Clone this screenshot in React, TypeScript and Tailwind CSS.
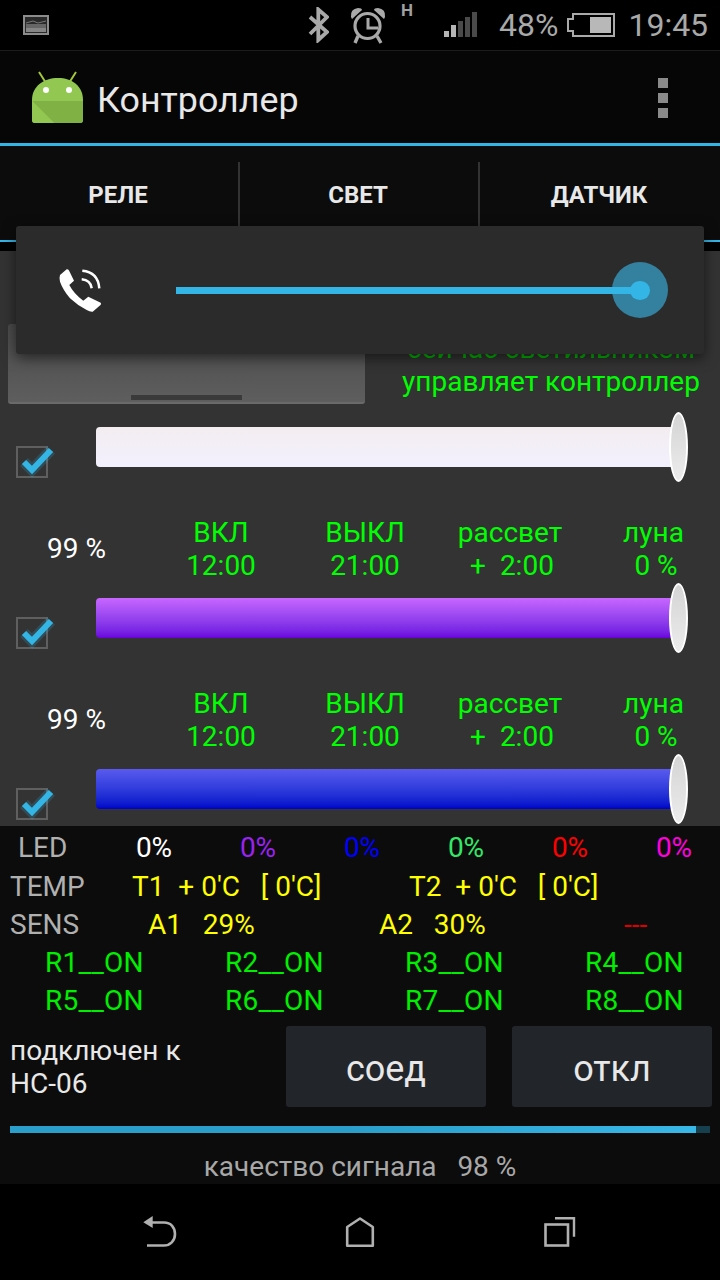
import React from "react";

const Check = () => (
  <div className="relative w-[32px] h-[32px] border-2 border-[#5f5f5f] mt-[34px] shrink-0">
    <svg className="absolute left-[-2px] top-[-8px] overflow-visible" width="44" height="40" viewBox="16 438 44 40">
      <polyline points="24,460 32,468 51,448" fill="none" stroke="#33b5e5" strokeWidth="11" strokeOpacity="0.2" />
      <polyline points="24,460 32,468 51,448" fill="none" stroke="#33b5e5" strokeWidth="6" />
    </svg>
  </div>
);

const Slider = ({ bar }: { bar: string }) => (
  <div className="relative flex h-[70px] pl-[16px]">
    <Check />
    <div className={`ml-[48px] mt-[15px] h-[40px] w-[578px] rounded-l-[4px] ${bar}`} />
    <div className="absolute left-[669px] top-0 h-[70px] w-[19px] rounded-[50%] border-2 border-white bg-gradient-to-b from-[#d4d4d4] to-[#ececec]" />
  </div>
);

const Info = () => (
  <div className="flex h-[101px] pt-[34px] text-[28px] leading-[33px] text-[#00ff00]">
    <div className="w-[149px] shrink-0 pl-[47px] self-center text-white pb-[3px]">99 %</div>
    <div className="w-[144px] shrink-0 text-center">ВКЛ<br />12:00</div>
    <div className="w-[144px] shrink-0 text-center">ВЫКЛ<br />21:00</div>
    <div className="w-[146px] shrink-0 text-center">рассвет<br /><span className="pl-[4px]">+&nbsp; 2:00</span></div>
    <div className="w-[141px] shrink-0 text-center">луна<br /><span className="pl-[5px]">0 %</span></div>
  </div>
);

const led = ["text-white", "text-[#9a22f0]", "text-[#0000ff]", "text-[#33e866]", "text-[#ff0000]", "text-[#ff00dd]"];

export default function App() {
  return (
    <div className="w-[720px] h-[1280px] overflow-hidden relative bg-black font-['Roboto',sans-serif]">
      {/* status bar */}
      <div className="h-[51px] bg-black border-b border-[#1c1c1c] flex items-center relative">
        <svg className="ml-[23px]" width="26" height="20" viewBox="0 0 26 20">
          <rect x="1" y="1" width="24" height="18" fill="#2a2a2a" stroke="#8c8c8c" strokeWidth="2" />
          <rect x="3" y="9" width="20" height="4" fill="#666" />
          <rect x="3" y="13" width="20" height="4" fill="#858585" />
          <path d="M3 8 L10 6 L15 8 L23 6" stroke="#777" fill="none" strokeWidth="1" />
        </svg>
        <svg className="ml-[258px]" width="22" height="36" viewBox="0 0 22 36" fill="none" stroke="#a9a9a9" strokeWidth="3.8">
          <path d="M3 10 L20 25 L11.3 33 V2.5 L20 10 L3 27" />
        </svg>
        <svg className="ml-[21px]" width="38" height="38" viewBox="0 0 38 38" fill="none" stroke="#a9a9a9">
          <circle cx="17.5" cy="20" r="12.5" strokeWidth="3.2" />
          <path d="M18 12 V22 H28" strokeWidth="3" />
          <path d="M1 11 Q0 3 8 2 Q12 2 12 4 L2 13 Z M35 11 Q36 3 28 2 Q24 2 24 4 L34 13 Z" fill="#a9a9a9" stroke="none" />
          <path d="M8 30 L5 37 M27 30 L31 37" strokeWidth="3.4" />
        </svg>
        <span className="absolute left-[401px] top-[1px] text-[17px] leading-[18px] font-bold text-[#a0a0a0]">H</span>
        <svg className="ml-[56px]" width="33" height="28" viewBox="0 0 33 28">
          <rect x="0" y="20" width="5" height="6" fill="#b5b5b5" />
          <rect x="7" y="14" width="5" height="12" fill="#b5b5b5" />
          <rect x="14" y="10" width="5" height="16" fill="#4a4a4a" />
          <rect x="21" y="6" width="5" height="20" fill="#4a4a4a" />
          <rect x="28" y="1" width="5" height="25" fill="#4a4a4a" />
        </svg>
        <span className="ml-[22px] text-[32px] leading-[38px] text-[#a9a9a9]">48%</span>
        <svg className="ml-[9px]" width="48" height="24" viewBox="0 0 48 24" fill="none" stroke="#a9a9a9" strokeWidth="2">
          <path d="M47 1 H6 V6 H1 V18 H6 V23 H47 Z" />
          <rect x="23" y="4" width="21" height="16" fill="#b8b8b8" stroke="none" />
        </svg>
        <span className="ml-[13px] text-[32px] leading-[38px] text-[#a9a9a9]">19:45</span>
      </div>

      {/* action bar */}
      <div className="h-[92px] bg-[#060606] flex items-center relative">
        <svg className="ml-[31px]" width="54" height="54" viewBox="0 0 54 54">
          <path d="M8 2 L15 13 M45 2 L38 13" stroke="#a4c639" strokeWidth="2" />
          <path d="M1 30 C1 16 13 8 27 8 C41 8 52 16 52 30 V50 Q52 53 49 53 H4 Q1 53 1 50 Z" fill="#92c852" />
          <path d="M1 31 H52 V50 Q52 53 49 53 H23 Z" fill="#7fb145" />
          <path d="M1 31 L23 53 H4 Q1 53 1 50 Z" fill="#92c852" />
          <circle cx="15" cy="20" r="3" fill="#fff" />
          <circle cx="38" cy="20" r="3" fill="#fff" />
        </svg>
        <span className="ml-[12px] pt-[5px] text-[35.8px] leading-[42px] text-[#e8e8e8]">Контроллер</span>
        <div className="ml-auto mr-[52px] mt-[2px] flex flex-col gap-[5px]">
          <div className="w-[10px] h-[10px] bg-[#8a8a8a]" />
          <div className="w-[10px] h-[10px] bg-[#8a8a8a]" />
          <div className="w-[10px] h-[10px] bg-[#8a8a8a]" />
        </div>
      </div>
      <div className="h-[3px] bg-[#33b5e5]" />

      {/* tabs */}
      <div className="h-[94px] bg-[#0c0c0c] flex pt-[16px]">
        {["РЕЛЕ", "СВЕТ", "ДАТЧИК"].map((t, i) => (
          <div key={t} className={`w-[240px] h-[66px] flex items-center justify-center text-[24px] font-bold text-[#e8e8e8] pr-[2px] ${i < 2 ? "border-r-2 border-[#333333]" : ""}`}>
            <span className="pb-[1px]">{t}</span>
          </div>
        ))}
      </div>
      <div className="h-[2px] bg-[#33b5e5]" />
      <div className="h-[9px] bg-black" />

      {/* main */}
      <div className="h-[575px] bg-[#333333] pt-[73px]">
        <div className="flex h-[80px] mb-[8px]">
          <div className="ml-[8px] w-[357px] h-[80px] rounded-[3px] bg-gradient-to-b from-[#4a4a4a] to-[#5e5e5e] border-b-2 border-[#6a6a6a] flex items-end justify-center pb-[2px]">
            <div className="w-[111px] h-[5px] bg-[#3a3a3a]" />
          </div>
          <div className="ml-[36px] w-[300px] text-center text-[28px] leading-[33px] text-[#00ff00] pt-[8px] whitespace-nowrap">
            <div className="text-[#00b800]">сейчас светильником</div>
            <div>управляет контроллер</div>
          </div>
        </div>
        <Slider bar="bg-gradient-to-b from-[#f3edf0] to-[#f3f0fe]" />
        <Info />
        <Slider bar="bg-gradient-to-b from-[#c866ff] to-[#6a00dd]" />
        <Info />
        <Slider bar="bg-gradient-to-b from-[#5a5aee] to-[#0000c8]" />
      </div>

      {/* data panel */}
      <div className="h-[358px] bg-[#0c0c0c] text-[28px] leading-[38px]">
        <div className="flex h-[41px] items-center pt-[2px]">
          <div className="w-[102px] shrink-0 pl-[18px] text-[#b0b0b0]">LED</div>
          {led.map((c, i) => (
            <div key={i} className={`w-[104px] shrink-0 text-center ${c}`}>0%</div>
          ))}
        </div>
        <div className="flex h-[39px] items-center text-[#ffff00] whitespace-pre">
          <div className="w-[132px] shrink-0 pl-[10px] text-[#b0b0b0]">TEMP</div>
          <div className="w-[277px] shrink-0">T1  + 0'C   [ 0'C]</div>
          <div>T2  + 0'C   [ 0'C]</div>
        </div>
        <div className="flex h-[38px] items-center text-[#ffff00] whitespace-pre">
          <div className="w-[148px] shrink-0 pl-[10px] text-[#b0b0b0]">SENS</div>
          <div className="w-[231px] shrink-0">A1   29%</div>
          <div className="w-[245px] shrink-0">A2   30%</div>
          <div className="text-[#dd0000]">---</div>
        </div>
        {[["R1", "R2", "R3", "R4"], ["R5", "R6", "R7", "R8"]].map((row) => (
          <div key={row[0]} className="flex h-[38px] items-center pl-[45px] text-[#00ee00]">
            {row.map((r) => (
              <div key={r} className="w-[180px] shrink-0 tracking-[0.2px]">{r}__ON</div>
            ))}
          </div>
        ))}
        <div className="flex h-[81px] mt-[6px]">
          <div className="w-[286px] pl-[10px] pt-[8px] text-[28px] leading-[33px] text-[#e8e8e8]">подключен к<br />HC-06</div>
          <div className="w-[200px] h-[81px] rounded-[3px] bg-[#22262b] flex items-center justify-center pt-[5px] text-[36px] text-[#e8e8e8]">соед</div>
          <div className="ml-[26px] w-[200px] h-[81px] rounded-[3px] bg-[#22262b] flex items-center justify-center pt-[5px] text-[36px] text-[#e8e8e8]">откл</div>
        </div>
        <div className="mt-[19px] ml-[10px] w-[700px] h-[7px] bg-[#17404f]">
          <div className="h-full w-[686px] bg-gradient-to-r from-[#2a9fcb] via-[#2a9fcb] to-[#38b8e8]" />
        </div>
        <div className="mt-[15px] text-center text-[#a8a8a8] whitespace-pre">качество сигнала   98 %</div>
      </div>

      {/* nav bar */}
      <div className="h-[96px] bg-black flex items-start pt-[32px]">
        <svg className="ml-[142px]" width="36" height="32" viewBox="0 0 36 32" fill="none" stroke="#b0b0b0" strokeWidth="2.6">
          <path d="M10 6.5 H22 C29 6.5 33 11.5 33 18 C33 25 28 29.5 22 29.5 H5" />
          <path d="M1.3 6.3 L10.7 0 V12 Z" fill="#b0b0b0" stroke="none" />
        </svg>
        <svg className="ml-[166px]" width="32" height="32" viewBox="0 0 32 32" fill="none" stroke="#b0b0b0" strokeWidth="2.6">
          <path d="M3.2 11 L16 2.5 L28.8 11 V29.8 H3.2 Z" strokeLinejoin="round" />
        </svg>
        <svg className="ml-[166px]" width="34" height="32" viewBox="0 0 34 32" fill="none" stroke="#b0b0b0" strokeWidth="2.6">
          <rect x="3.5" y="8.5" width="22.5" height="21" />
          <path d="M13 2.3 H32 V20.7" strokeWidth="2.4" />
        </svg>
      </div>

      {/* volume popup */}
      <div className="absolute left-[16px] top-[226px] w-[688px] h-[128px] rounded-[3px] bg-[#2b2b2b] shadow-[0_4px_14px_rgba(0,0,0,0.55)] flex items-center">
        <svg className="ml-[42px]" width="46" height="46" viewBox="0 0 46 46" fill="#ffffff">
          <path d="M2 8 L8.7 2.3 Q10 2 11 3.5 L16 13.7 L11.3 18 Q16 27 25.3 33.7 L30.3 29.7 L42.7 35.7 Q43.5 37 42.5 38 L34.7 44.7 Q32 45 28.7 43 Q19 38 12 31.3 Q5 23 2 14.7 Q1 11 2 8 Z" />
          <path d="M24.3 3.7 Q40 5 41.3 21.3 M23.7 12.3 Q32.5 13 33.7 21.3" fill="none" stroke="#ffffff" strokeWidth="2.5" />
        </svg>
        <div className="relative ml-[72px] w-[464px] h-[7px]">
          <div className="absolute right-[-28px] top-[-25px] w-[56px] h-[56px] rounded-full bg-[#34809f] blur-[0.5px]" />
          <div className="absolute inset-0 bg-[#33b5e5]" />
          <div className="absolute right-[-10px] top-[-6px] w-[20px] h-[19px] rounded-full bg-[#33b5e5]" />
        </div>
      </div>
    </div>
  );
}
